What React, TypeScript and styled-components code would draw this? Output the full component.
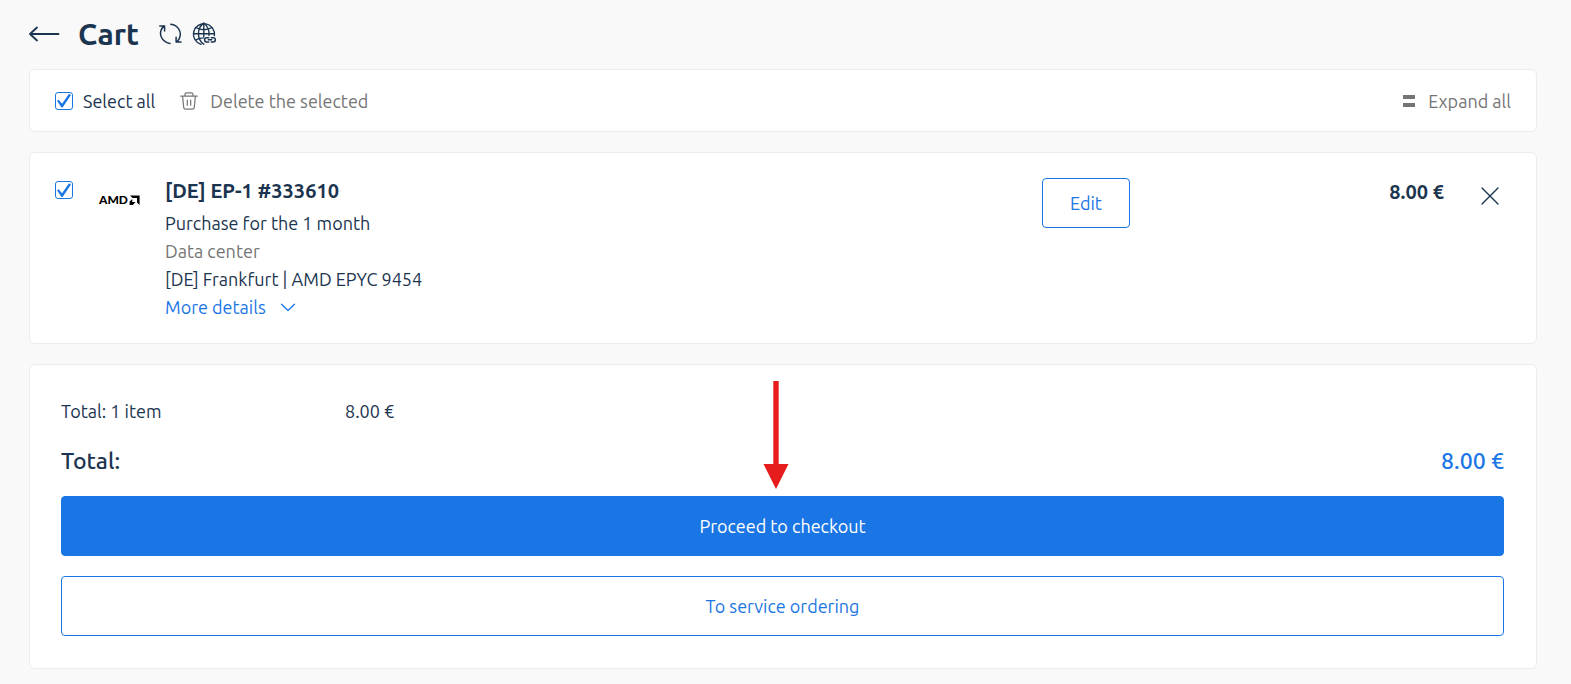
import React from "react";
import styled, { createGlobalStyle } from "styled-components";

const color = {
  ink: "#1b344f",
  muted: "#757575",
  accent: "#1b76e5",
  page: "#f9f9f9",
  line: "#ececec",
  pointer: "#e71d1d",
};

const GlobalStyle = createGlobalStyle`
  *, *::before, *::after { box-sizing: border-box; }
  body {
    margin: 0;
    background: ${color.page};
    color: ${color.ink};
    font-family: "Ubuntu", "Noto Sans", sans-serif;
    font-size: 18px;
    line-height: 28px;
  }
  button { font: inherit; cursor: pointer; }
`;

const Page = styled.main`
  display: flex;
  flex-direction: column;
  gap: 20px;
  padding: 0 34px 16px 29px;
`;

const Header = styled.header`
  display: flex;
  align-items: center;
  height: 49px;
  padding-top: 18px;
`;

const Title = styled.h1`
  margin: 0 20px 0 18px;
  font-size: 30px;
  font-weight: 600;
  line-height: 32px;
`;

const IconButton = styled.button<{ $gap?: number }>`
  display: flex;
  flex: none;
  margin: 0 ${(p) => p.$gap ?? 0}px 0 0;
  padding: 0;
  border: 0;
  background: none;
  color: ${color.ink};
`;

const BackLink = styled.a`
  display: flex;
  color: ${color.ink};
`;

const Card = styled.section`
  background: #fff;
  border: 1px solid ${color.line};
  border-radius: 6px;
`;

const Toolbar = styled(Card)`
  display: flex;
  align-items: center;
  height: 63px;
  padding: 0 25px;
`;

const CheckLabel = styled.label`
  display: flex;
  align-items: center;
  gap: 10px;
  margin-right: 25px;
`;

const Checkbox = styled.input`
  appearance: none;
  flex: none;
  width: 18px;
  height: 18px;
  margin: 0;
  border: 1px solid ${color.accent};
  border-radius: 3px;
  background: #fff;
  display: grid;
  place-items: center;
  &:checked::before {
    content: "";
    width: 14px;
    height: 14px;
    background: ${color.accent};
    clip-path: polygon(0 52%, 12% 44%, 36% 74%, 86% 2%, 100% 10%, 40% 100%, 32% 100%);
  }
`;

const ToolButton = styled.button<{ $end?: boolean }>`
  display: flex;
  align-items: center;
  gap: 12px;
  margin-left: ${(p) => (p.$end ? "auto" : "0")};
  padding: 0;
  border: 0;
  background: none;
  color: ${color.muted};
`;

const Item = styled(Card)`
  display: grid;
  grid-template-columns: 18px 40px minmax(0, 1fr) minmax(0, 486px);
  align-items: start;
  height: 192px;
  padding: 24px 37px 20px 25px;
`;

const ItemCheck = styled.div`
  padding-top: 4px;
`;

const Logo = styled.svg`
  display: block;
  margin: 18px 0 0 26px;
  overflow: visible;
`;

const Details = styled.div`
  padding-left: 52px;
`;

const Name = styled.h2`
  margin: 0 0 4px;
  font-size: 20px;
  font-weight: 600;
  line-height: 28px;
`;

const Text = styled.p<{ $muted?: boolean }>`
  margin: 0;
  color: ${(p) => (p.$muted ? color.muted : color.ink)};
`;

const MoreButton = styled.button`
  display: flex;
  align-items: center;
  gap: 14px;
  padding: 0;
  border: 0;
  background: none;
  color: ${color.accent};
`;

const Actions = styled.div`
  display: flex;
  align-items: flex-start;
  padding: 1px 0 0 29px;
`;

const Button = styled.button<{ $primary?: boolean; $wide?: boolean }>`
  width: ${(p) => (p.$wide ? "100%" : "88px")};
  height: ${(p) => (p.$wide ? 60 : 50)}px;
  padding: 0;
  border: 1px solid ${color.accent};
  border-radius: 4px;
  background: ${(p) => (p.$primary ? color.accent : "#fff")};
  color: ${(p) => (p.$primary ? "#fff" : color.accent)};
`;

const Price = styled.strong`
  margin: 0 37px 0 auto;
  font-size: 20px;
  font-weight: 600;
`;

const Summary = styled(Card)`
  position: relative;
  display: flex;
  flex-direction: column;
  gap: 20px;
  padding: 32px 32px 32px 31px;
`;

const Count = styled.div`
  display: grid;
  grid-template-columns: 284px 1fr;
`;

const Total = styled.div`
  display: flex;
  justify-content: space-between;
  font-size: 23px;
  font-weight: 500;
  line-height: 31px;
`;

const TotalPrice = styled.span`
  color: ${color.accent};
`;

const Pointer = styled.svg`
  position: absolute;
  top: 16px;
  left: calc(50% - 20px);
`;

const stroke = {
  fill: "none",
  stroke: "currentColor",
  strokeLinecap: "round" as const,
  strokeLinejoin: "round" as const,
};

export default function App() {
  return (
    <>
      <GlobalStyle />
      <Page>
        <Header>
          <BackLink href="#" aria-label="Back">
            <svg width="31" height="16" viewBox="0 0 31 16" {...stroke} strokeWidth="1.8">
              <path d="M29.5 8H1M8 1.5 1 8l7 6.5" />
            </svg>
          </BackLink>
          <Title>Cart</Title>
          <IconButton aria-label="Refresh" $gap={10}>
            <svg width="23" height="22" viewBox="0 0 23 22" {...stroke} strokeWidth="1.5">
              <path d="M11 20.4C4.5 19.4 0 13.5 2 7.5Q2.9 5 4.8 3.1M.8 3h4.8v4.9" />
              <path d="M11.8 1.3C18.5 2 23 8.3 20.7 14.4q-.8 2.4-2.7 4.4M22 19h-4.9v-4.8" />
            </svg>
          </IconButton>
          <IconButton aria-label="Language">
            <svg width="24" height="24" viewBox="0 0 24 24" {...stroke} strokeWidth="1.4">
              <path d="M9 22.3A10.5 10.5 0 1 1 22.4 13.6M11.8 1.2v13.5M1.3 11.7h21M3.5 5.5q8.3 4.5 16.6 0M3.5 18.2q3.8-2.3 7.8-2.3" />
              <path d="M11.8 1.2C4.7 6 4.7 17.4 11.8 22.2M11.8 1.2c3.9 2.8 5.7 7.2 5.1 12.2" />
              <path d="M16.7 19.9h-2a2.1 2.1 0 0 1 0-4.2h2M19.3 15.7h2a2.1 2.1 0 0 1 0 4.2h-2M16.3 17.8h3.4" strokeWidth="1.5" />
            </svg>
          </IconButton>
        </Header>

        <Toolbar aria-label="Cart actions">
          <CheckLabel>
            <Checkbox type="checkbox" defaultChecked />
            Select all
          </CheckLabel>
          <ToolButton>
            <svg width="18" height="18" viewBox="0 0 18 18" {...stroke} strokeWidth="1.2">
              <path d="M.8 4.2h16.4M5 4V2.6Q5 .8 6.8.8h4.4Q13 .8 13 2.6V4M2.6 4.4l1.1 11q.2 1.8 2 1.8h6.6q1.8 0 2-1.8l1.1-11M7.3 8v5.2M10.7 8v5.2" />
            </svg>
            Delete the selected
          </ToolButton>
          <ToolButton $end>
            <svg width="14" height="14" viewBox="0 0 14 14" fill="currentColor">
              <path d="M1 1h12v4H1zM1 9h12v4H1z" />
            </svg>
            Expand all
          </ToolButton>
        </Toolbar>

        <Item aria-label="Cart item">
          <ItemCheck>
            <Checkbox type="checkbox" defaultChecked aria-label="Select [DE] EP-1 #333610" />
          </ItemCheck>
          <Logo width="41" height="10" viewBox="0 0 41 10" role="img" aria-label="AMD">
            <text x="0" y="9.4" fontFamily="Lato, sans-serif" fontSize="12" fontWeight="900" fill="#000">AMD</text>
            <path d="M31 .4h9.6V10l-2.6-2.6V3h-4.4zM33.3 3.9v3.2h3.2L33.8 10h-3.2V6.6z" fill="#000" />
          </Logo>
          <Details>
            <Name>[DE] EP-1 #333610</Name>
            <Text>Purchase for the 1 month</Text>
            <Text $muted>Data center</Text>
            <Text>[DE] Frankfurt | AMD EPYC 9454</Text>
            <MoreButton>
              More details
              <svg width="16" height="9" viewBox="0 0 16 9" {...stroke} strokeWidth="1.3">
                <path d="m1.5 1.2 6.5 6.3 6.5-6.3" />
              </svg>
            </MoreButton>
          </Details>
          <Actions>
            <Button>Edit</Button>
            <Price>8.00 €</Price>
            <IconButton aria-label="Remove item">
              <svg width="18" height="36" viewBox="0 0 18 36" {...stroke} strokeWidth="1.4">
                <path d="m1 10 16 16M17 10 1 26" />
              </svg>
            </IconButton>
          </Actions>
        </Item>

        <Summary aria-label="Order summary">
          <Count>
            <span>Total: 1 item</span>
            <span>8.00 €</span>
          </Count>
          <Total>
            <span>Total:</span>
            <TotalPrice>8.00 €</TotalPrice>
          </Total>
          <Button $primary $wide>Proceed to checkout</Button>
          <Button $wide>To service ordering</Button>
          <Pointer width="26" height="110" viewBox="0 0 26 110" fill={color.pointer} aria-hidden="true">
            <path d="M10.3 0h5.4v83h9.8L13 108 .5 83h9.8z" />
          </Pointer>
        </Summary>
      </Page>
    </>
  );
}
